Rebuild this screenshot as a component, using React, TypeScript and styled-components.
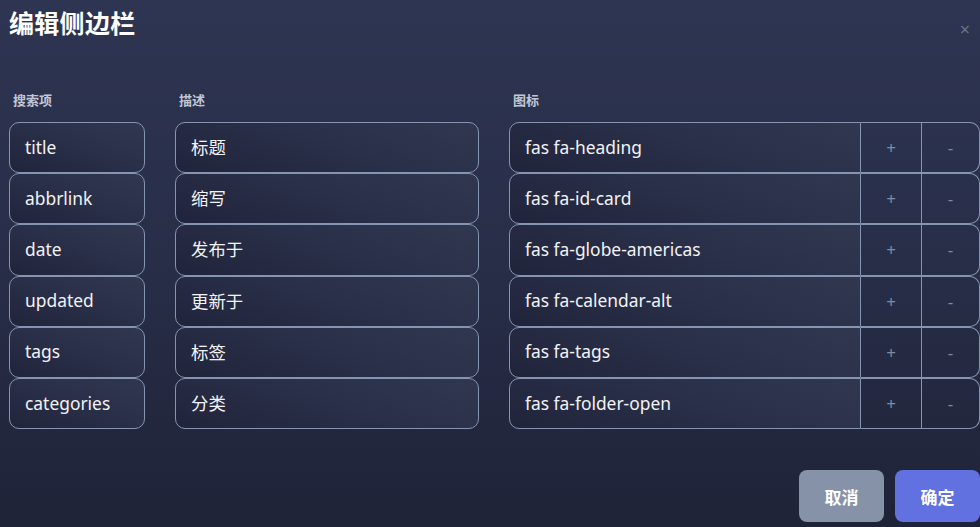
import React from "react";
import styled, { createGlobalStyle } from "styled-components";

const rows = [
  { key: "title", desc: "标题", icon: "fas fa-heading" },
  { key: "abbrlink", desc: "缩写", icon: "fas fa-id-card" },
  { key: "date", desc: "发布于", icon: "fas fa-globe-americas" },
  { key: "updated", desc: "更新于", icon: "fas fa-calendar-alt" },
  { key: "tags", desc: "标签", icon: "fas fa-tags" },
  { key: "categories", desc: "分类", icon: "fas fa-folder-open" },
];

export default function App() {
  return (
    <>
      <GlobalStyle />
      <Dialog>
        <Header>
          <Title>编辑侧边栏</Title>
          <Close>×</Close>
        </Header>

        <Table>
          <Label>搜索项</Label>
          <Label>描述</Label>
          <Label>图标</Label>

          {rows.map((r) => (
            <React.Fragment key={r.key}>
              <Field>{r.key}</Field>
              <Field>{r.desc}</Field>
              <IconGroup>
                <Field $group>{r.icon}</Field>
                <StepButton>+</StepButton>
                <StepButton $last>-</StepButton>
              </IconGroup>
            </React.Fragment>
          ))}
        </Table>

        <Footer>
          <Button $kind="cancel">取消</Button>
          <Button $kind="ok">确定</Button>
        </Footer>
      </Dialog>
    </>
  );
}

const GlobalStyle = createGlobalStyle`
  html, body {
    margin: 0;
    padding: 0;
    height: 100%;
    overflow: hidden;
  }
  body {
    font-family: "Noto Sans", "Noto Sans CJK SC", sans-serif;
    background: #22263a;
  }
`;

const Dialog = styled.div`
  width: 980px;
  height: 527px;
  box-sizing: border-box;
  padding: 0 0 5px 9px;
  display: flex;
  flex-direction: column;
  background: linear-gradient(180deg, #2e3552 0%, #282e48 50%, #1f2338 100%);
  color: #fff;
`;

const Header = styled.div`
  display: flex;
  align-items: center;
  justify-content: space-between;
  height: 46px;
  padding-right: 10px;
`;

const Title = styled.h2`
  margin: 0;
  font-size: 25px;
  font-weight: 700;
  color: #ffffff;
  letter-spacing: 0.3px;
  transform: translateY(-1px);
`;

const Close = styled.span`
  font-size: 18px;
  color: #66728f;
  margin-top: 12px;
`;

const Table = styled.div`
  margin-top: 40px;
  display: grid;
  grid-template-columns: 136px 304px 1fr;
  column-gap: 30px;
  grid-auto-rows: 51.2px;
  grid-template-rows: 36px;
`;

const Label = styled.div`
  font-size: 13px;
  font-weight: 700;
  color: #c3c7d3;
  padding-left: 4px;
  padding-top: 4px;
`;

const Field = styled.div<{ $group?: boolean }>`
  box-sizing: border-box;
  height: 100%;
  display: flex;
  align-items: center;
  padding: 0 0 2px 15px;
  font-size: 17.4px;
  color: #f2f3f7;
  border: 1px solid #8595b1;
  border-radius: ${(p) => (p.$group ? "10px 0 0 10px" : "10px")};
  background: linear-gradient(20deg, #20243b 0%, #2a3049 55%, #30374f 100%);
  ${(p) => p.$group && "flex: 1;"}
`;

const IconGroup = styled.div`
  display: flex;
  height: 100%;
`;

const StepButton = styled.div<{ $last?: boolean }>`
  box-sizing: border-box;
  width: ${(p) => (p.$last ? "58px" : "61px")};
  height: 100%;
  display: flex;
  align-items: center;
  justify-content: center;
  font-size: 17px;
  color: #7e8aa6;
  border: 1px solid #8595b1;
  border-left: none;
  border-radius: ${(p) => (p.$last ? "0 10px 10px 0" : "0")};
`;

const Footer = styled.div`
  margin-top: auto;
  display: flex;
  justify-content: flex-end;
  gap: 11px;
`;

const Button = styled.button<{ $kind: "cancel" | "ok" }>`
  width: 85px;
  height: 52px;
  border: none;
  border-radius: 8px;
  font-family: "Noto Sans", "Noto Sans CJK SC", sans-serif;
  font-size: 17px;
  font-weight: 700;
  color: #ffffff;
  background: ${(p) => (p.$kind === "ok" ? "#6271e0" : "#8592a8")};
`;
